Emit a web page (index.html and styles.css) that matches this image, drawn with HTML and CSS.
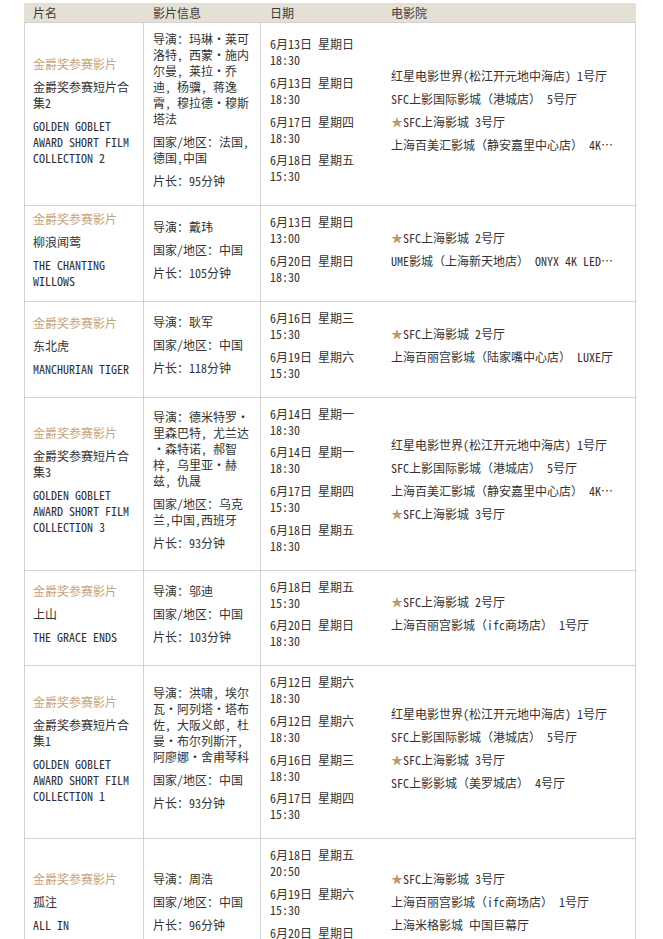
FILE: index.html
```html
<!DOCTYPE html>
<html lang="zh-CN">
<head>
<meta charset="utf-8">
<title>金爵奖参赛影片排片</title>
<link rel="stylesheet" href="styles.css">
</head>
<body>
<table class="schedule">
  <thead>
    <tr>
      <th class="c-name">片名</th>
      <th class="c-info">影片信息</th>
      <th class="c-date">日期</th>
      <th class="c-cinema">电影院</th>
    </tr>
  </thead>
  <tbody>
    <tr>
      <td class="c-name">
        <p class="tag">金爵奖参赛影片</p>
        <p class="title">金爵奖参赛短片合集2</p>
        <p class="en">GOLDEN GOBLET AWARD SHORT FILM COLLECTION 2</p>
      </td>
      <td class="c-info">
        <p>导演：玛琳<span class="dot">·</span>莱可洛特, 西蒙<span class="dot">·</span>施内尔曼, 莱拉<span class="dot">·</span>乔迪, 杨骥, 蒋逸霄, 穆拉德<span class="dot">·</span>穆斯塔法</p>
        <p>国家/地区：法国,德国,中国</p>
        <p>片长：95分钟</p>
      </td>
      <td class="c-date">
        <p><span>6月13日 星期日</span><span>18:30</span></p>
        <p><span>6月13日 星期日</span><span>18:30</span></p>
        <p><span>6月17日 星期四</span><span>18:30</span></p>
        <p><span>6月18日 星期五</span><span>15:30</span></p>
      </td>
      <td class="c-cinema">
        <p>红星电影世界(松江开元地中海店) 1号厅</p>
        <p>SFC上影国际影城（港城店） 5号厅</p>
        <p><span class="star">★</span>SFC上海影城 3号厅</p>
        <p>上海百美汇影城（静安嘉里中心店） 4K激光厅</p>
      </td>
    </tr>
    <tr>
      <td class="c-name">
        <p class="tag">金爵奖参赛影片</p>
        <p class="title">柳浪闻莺</p>
        <p class="en">THE CHANTING WILLOWS</p>
      </td>
      <td class="c-info">
        <p>导演：戴玮</p>
        <p>国家/地区：中国</p>
        <p>片长：105分钟</p>
      </td>
      <td class="c-date">
        <p><span>6月13日 星期日</span><span>13:00</span></p>
        <p><span>6月20日 星期日</span><span>18:30</span></p>
      </td>
      <td class="c-cinema">
        <p><span class="star">★</span>SFC上海影城 2号厅</p>
        <p>UME影城（上海新天地店） ONYX 4K LED影厅</p>
      </td>
    </tr>
    <tr>
      <td class="c-name">
        <p class="tag">金爵奖参赛影片</p>
        <p class="title">东北虎</p>
        <p class="en">MANCHURIAN TIGER</p>
      </td>
      <td class="c-info">
        <p>导演：耿军</p>
        <p>国家/地区：中国</p>
        <p>片长：118分钟</p>
      </td>
      <td class="c-date">
        <p><span>6月16日 星期三</span><span>15:30</span></p>
        <p><span>6月19日 星期六</span><span>15:30</span></p>
      </td>
      <td class="c-cinema">
        <p><span class="star">★</span>SFC上海影城 2号厅</p>
        <p>上海百丽宫影城（陆家嘴中心店） LUXE厅</p>
      </td>
    </tr>
    <tr>
      <td class="c-name">
        <p class="tag">金爵奖参赛影片</p>
        <p class="title">金爵奖参赛短片合集3</p>
        <p class="en">GOLDEN GOBLET AWARD SHORT FILM COLLECTION 3</p>
      </td>
      <td class="c-info">
        <p>导演：德米特罗<span class="dot">·</span>里森巴特, 尤兰达<span class="dot">·</span>森特诺, 郝智梓, 乌里亚<span class="dot">·</span>赫兹, 仇晟</p>
        <p>国家/地区：乌克兰,中国,西班牙</p>
        <p>片长：93分钟</p>
      </td>
      <td class="c-date">
        <p><span>6月14日 星期一</span><span>18:30</span></p>
        <p><span>6月14日 星期一</span><span>18:30</span></p>
        <p><span>6月17日 星期四</span><span>15:30</span></p>
        <p><span>6月18日 星期五</span><span>18:30</span></p>
      </td>
      <td class="c-cinema">
        <p>红星电影世界(松江开元地中海店) 1号厅</p>
        <p>SFC上影国际影城（港城店） 5号厅</p>
        <p>上海百美汇影城（静安嘉里中心店） 4K激光厅</p>
        <p><span class="star">★</span>SFC上海影城 3号厅</p>
      </td>
    </tr>
    <tr>
      <td class="c-name">
        <p class="tag">金爵奖参赛影片</p>
        <p class="title">上山</p>
        <p class="en">THE GRACE ENDS</p>
      </td>
      <td class="c-info">
        <p>导演：邬迪</p>
        <p>国家/地区：中国</p>
        <p>片长：103分钟</p>
      </td>
      <td class="c-date">
        <p><span>6月18日 星期五</span><span>15:30</span></p>
        <p><span>6月20日 星期日</span><span>18:30</span></p>
      </td>
      <td class="c-cinema">
        <p><span class="star">★</span>SFC上海影城 2号厅</p>
        <p>上海百丽宫影城（ifc商场店） 1号厅</p>
      </td>
    </tr>
    <tr>
      <td class="c-name">
        <p class="tag">金爵奖参赛影片</p>
        <p class="title">金爵奖参赛短片合集1</p>
        <p class="en">GOLDEN GOBLET AWARD SHORT FILM COLLECTION 1</p>
      </td>
      <td class="c-info">
        <p>导演：洪啸, 埃尔瓦<span class="dot">·</span>阿列塔<span class="dot">·</span>塔布佐, 大阪义郎, 杜曼<span class="dot">·</span>布尔列斯汗, 阿廖娜<span class="dot">·</span>舍甫琴科</p>
        <p>国家/地区：中国</p>
        <p>片长：93分钟</p>
      </td>
      <td class="c-date">
        <p><span>6月12日 星期六</span><span>18:30</span></p>
        <p><span>6月12日 星期六</span><span>18:30</span></p>
        <p><span>6月16日 星期三</span><span>18:30</span></p>
        <p><span>6月17日 星期四</span><span>15:30</span></p>
      </td>
      <td class="c-cinema">
        <p>红星电影世界(松江开元地中海店) 1号厅</p>
        <p>SFC上影国际影城（港城店） 5号厅</p>
        <p><span class="star">★</span>SFC上海影城 3号厅</p>
        <p>SFC上影影城（美罗城店） 4号厅</p>
      </td>
    </tr>
    <tr>
      <td class="c-name">
        <p class="tag">金爵奖参赛影片</p>
        <p class="title">孤注</p>
        <p class="en">ALL IN</p>
      </td>
      <td class="c-info">
        <p>导演：周浩</p>
        <p>国家/地区：中国</p>
        <p>片长：96分钟</p>
      </td>
      <td class="c-date">
        <p><span>6月18日 星期五</span><span>20:50</span></p>
        <p><span>6月19日 星期六</span><span>15:30</span></p>
        <p><span>6月20日 星期日</span><span>18:30</span></p>
      </td>
      <td class="c-cinema">
        <p><span class="star">★</span>SFC上海影城 3号厅</p>
        <p>上海百丽宫影城（ifc商场店） 1号厅</p>
        <p>上海米格影城 中国巨幕厅</p>
      </td>
    </tr>
  </tbody>
</table>
</body>
</html>
```

FILE: styles.css
```css
html, body {
  margin: 0;
  padding: 0;
  background: #ffffff;
}

body {
  font-family: "Noto Sans Mono CJK SC", "Noto Sans CJK SC", "DejaVu Sans Mono", monospace;
  font-size: 12px;
  line-height: 16px;
  color: #333333;
}

.schedule {
  margin: 3px 0 0 24px;
  width: 612px;
  table-layout: fixed;
  border-collapse: separate;
  border-spacing: 0;
}

.schedule th,
.schedule td {
  box-sizing: border-box;
  text-align: left;
}

.schedule th {
  height: 20px;
  padding: 0 9px;
  line-height: 19px;
  font-weight: normal;
  color: #3a3a3a;
  background: #e5e0d5;
  border-bottom: 1px solid #d2d2d2;
}

.schedule th.c-name { width: 120px; }
.schedule th.c-info { width: 117px; }
.schedule th.c-date { width: 121px; }
.schedule th.c-cinema { width: 254px; }

.schedule td {
  vertical-align: middle;
  padding: 8px 9px 9px 9px;
  border-bottom: 1px solid #d2d2d2;
}

.schedule td.c-name {
  padding: 5px 10px 5px 8px;
  border-left: 1px solid #d2d2d2;
  border-right: 1px solid #d2d2d2;
}

.schedule td.c-info {
  border-right: 1px solid #d2d2d2;
}

.schedule td.c-cinema {
  border-right: 1px solid #d2d2d2;
}

.schedule p {
  margin: 0 0 7px 0;
}

.schedule td.c-date p {
  margin-bottom: 6.75px;
}

.tag {
  color: #c4a57e;
}

.en {
  color: #2f2f2f;
}

.dot {
  display: inline-block;
  width: 12px;
  text-align: center;
}

.c-date p span {
  display: block;
}

.c-cinema p {
  width: 224px;
  white-space: nowrap;
  overflow: hidden;
  text-overflow: ellipsis;
}

.star {
  color: #b99a6c;
}
```
